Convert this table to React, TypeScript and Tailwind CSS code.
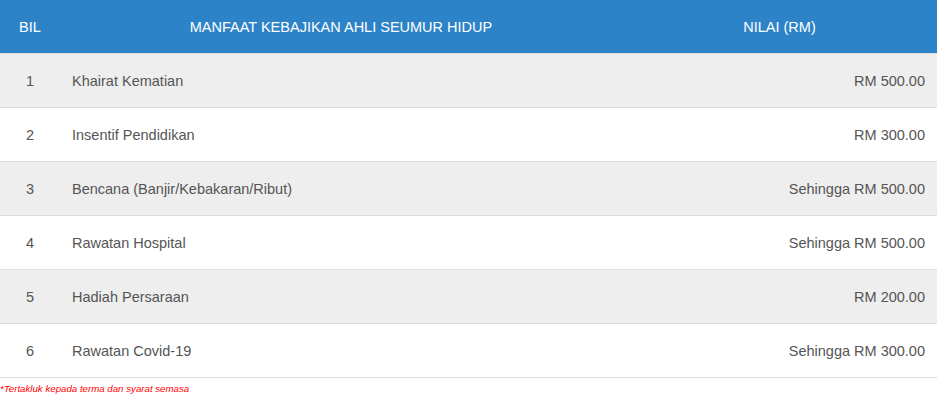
import React from "react";

const rows = [
  { no: 1, name: "Khairat Kematian", value: "RM 500.00" },
  { no: 2, name: "Insentif Pendidikan", value: "RM 300.00" },
  { no: 3, name: "Bencana (Banjir/Kebakaran/Ribut)", value: "Sehingga RM 500.00" },
  { no: 4, name: "Rawatan Hospital", value: "Sehingga RM 500.00" },
  { no: 5, name: "Hadiah Persaraan", value: "RM 200.00" },
  { no: 6, name: "Rawatan Covid-19", value: "Sehingga RM 300.00" },
];

const App = () => {
  return (
    <div className="w-[937px] bg-white font-['Liberation_Sans',Arial,sans-serif] text-[14.5px]">
      <table className="w-full border-collapse">
        <thead>
          <tr className="h-[53px] bg-[#2d83c8] text-white">
            <th className="w-[60px] p-0 pt-[3px] text-center font-normal">BIL</th>
            <th className="w-[562px] p-0 pt-[3px] text-center font-normal">
              MANFAAT KEBAJIKAN AHLI SEUMUR HIDUP
            </th>
            <th className="p-0 pt-[3px] text-center font-normal">NILAI (RM)</th>
          </tr>
        </thead>
        <tbody className="text-[#555]">
          {rows.map((r, i) => (
            <tr
              key={r.no}
              className={`h-[54px] border-t border-[#dddddd] ${i % 2 === 0 ? "bg-[#eeeeee]" : "bg-white"} ${
                i === rows.length - 1 ? "border-b" : ""
              }`}
            >
              <td className="p-0 pt-[3px] text-center">{r.no}</td>
              <td className="px-3 pb-0 pt-[3px]">{r.name}</td>
              <td className="px-3 pb-0 pt-[3px] text-right">{r.value}</td>
            </tr>
          ))}
        </tbody>
      </table>
      <p className="pt-[4px] text-[9.7px] italic leading-[14px] text-[#ff0000]">
        *Tertakluk kepada terma dan syarat semasa
      </p>
    </div>
  );
};

export default App;
